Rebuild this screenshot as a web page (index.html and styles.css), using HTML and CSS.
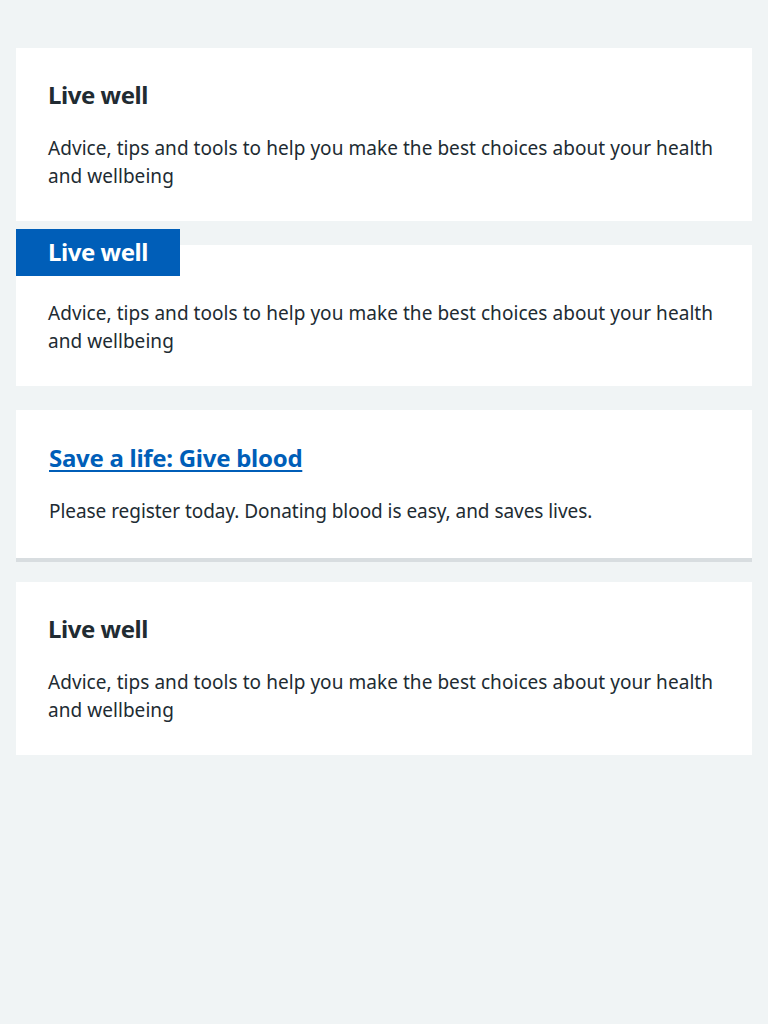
FILE: index.html
```html
<!DOCTYPE html>
<html lang="en">
<head>
<meta charset="utf-8">
<title>Cards</title>
<link rel="stylesheet" href="styles.css">
</head>
<body>
<main class="page">
  <div class="card">
    <h2 class="card-heading">Live well</h2>
    <p class="card-text">Advice, tips and tools to help you make the best choices about your health and wellbeing</p>
  </div>

  <div class="card card-feature">
    <h2 class="card-heading card-heading-feature">Live well</h2>
    <p class="card-text">Advice, tips and tools to help you make the best choices about your health and wellbeing</p>
  </div>

  <div class="card card-clickable">
    <h2 class="card-heading card-heading-link"><a class="card-link" href="#">Save a life: Give blood</a></h2>
    <p class="card-text card-text-tight">Please register today. Donating blood is easy, and saves lives.</p>
  </div>

  <div class="card card-last">
    <h2 class="card-heading">Live well</h2>
    <p class="card-text">Advice, tips and tools to help you make the best choices about your health and wellbeing</p>
  </div>
</main>
</body>
</html>
```
FILE: styles.css
```css
html, body {
  margin: 0;
  padding: 0;
  background: #f0f4f5;
}

body {
  font-family: "Noto Sans", "Open Sans", Arial, sans-serif;
  color: #212b32;
}

.page {
  display: flex;
  flex-direction: column;
  padding: 48px 16px 0;
}

.card {
  display: flex;
  flex-direction: column;
  background: #ffffff;
  padding: 32px 32px 31px;
}

.card-heading {
  margin: 0 0 24px;
  font-size: 24px;
  line-height: 30px;
  font-weight: 700;
  letter-spacing: -0.45px;
}

.card-heading-link {
  letter-spacing: -0.28px;
}

.card-text {
  margin: 0;
  font-size: 19px;
  line-height: 28px;
  font-weight: 400;
  letter-spacing: 0.05px;
}

.card-text-tight {
  letter-spacing: -0.05px;
}

.card-feature {
  margin-top: 24px;
  padding-top: 0;
}

.card-heading-feature {
  align-self: flex-start;
  margin: -16px 0 23px -32px;
  padding: 8px 32px 9px;
  background: #005eb8;
  color: #ffffff;
}

.card-clickable {
  margin-top: 24px;
  padding: 33px 32px 33px 33px;
  border-bottom: 4px solid #d8dde0;
}

.card-link {
  color: #005eb8;
  text-decoration: underline;
  text-decoration-thickness: 2px;
  text-underline-offset: 3px;
}

.card-last {
  margin-top: 20px;
}
```
